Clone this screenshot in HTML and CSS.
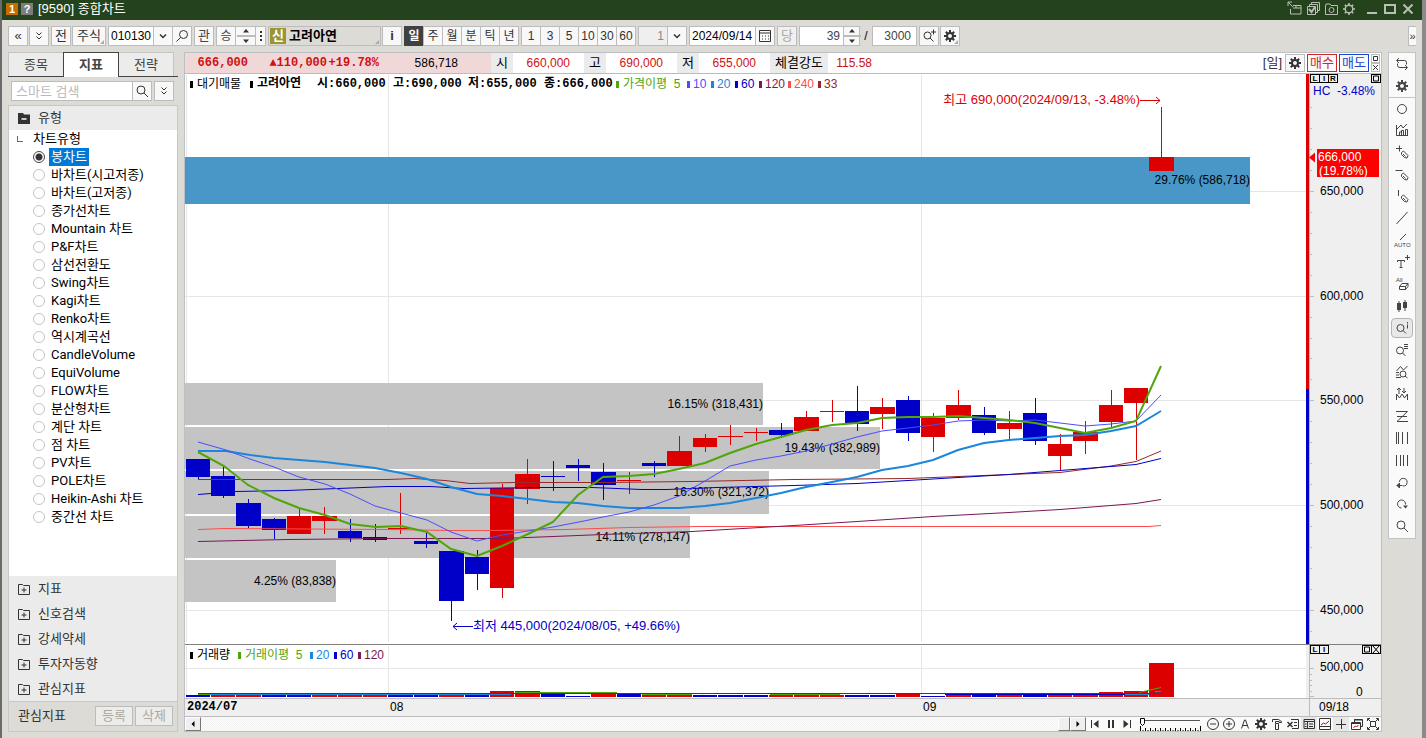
FILE: index.html
```html
<!DOCTYPE html>
<html lang="ko">
<head>
<meta charset="utf-8">
<title>[9590] 종합차트</title>
<link rel="stylesheet" href="styles.css">
</head>
<body>
<svg class="defs" aria-hidden="true">
  <symbol id="gear" viewBox="0 0 16 16"><circle cx="8" cy="8" r="3" fill="none" stroke="currentColor" stroke-width="2"/><path d="M8 2v2.5M8 11.500v2.500M2 8h2.500M11.500 8h2.500M3.800 3.800l1.800 1.800M10.400 10.400l1.800 1.800M12.200 3.800l-1.800 1.800M5.600 10.400l-1.800 1.800" stroke="currentColor" stroke-width="2"/></symbol>
  <symbol id="gear-thin" viewBox="0 0 16 16"><circle cx="8" cy="8" r="3.8" fill="none" stroke="currentColor" stroke-width="1.400"/><path d="M8 2v2M8 12v2M2 8h2M12 8h2M3.800 3.800l1.400 1.400M10.800 10.800l1.400 1.400M12.200 3.800l-1.400 1.400M5.200 10.800l-1.400 1.400" stroke="currentColor" stroke-width="1.600"/></symbol>
  <symbol id="lens" viewBox="0 0 16 16"><circle cx="7" cy="7" r="4" fill="none" stroke="currentColor"/><path d="M10 10l4 4" stroke="currentColor"/></symbol>
  <symbol id="lens-l" viewBox="0 0 16 16"><circle cx="9.500" cy="6.500" r="4" fill="none" stroke="currentColor"/><path d="M6.500 9.500l-4 4" stroke="currentColor"/></symbol>
  <symbol id="chev" viewBox="0 0 8 16"><path d="M1 6.500l3 3 3-3" fill="none" stroke="currentColor" stroke-width="1.500"/></symbol>
  <symbol id="dchev" viewBox="0 0 16 16"><path d="M5.500 4.500l2.500 2.500 2.500-2.500M5.500 8.500l2.500 2.500 2.500-2.500" fill="none" stroke="currentColor"/></symbol>
  <symbol id="updown" viewBox="0 0 18 18"><path d="M9 2l3 3.500H6zM9 16l3-3.500H6z" fill="currentColor"/><path d="M0 9h18" stroke="#bbb" stroke-width="2"/></symbol>
  <symbol id="folder" viewBox="0 0 12 12"><path d="M.5 1.500h4l1 1h6v9H.5z" fill="none" stroke="currentColor"/><path d="M6 4.500v5M3.500 7h5" stroke="currentColor"/></symbol>
  <symbol id="box" viewBox="0 0 8 7"><path d="M1.500 1h5v5h-5z" fill="none" stroke="currentColor" stroke-width="1"/></symbol>
  <symbol id="pen" viewBox="0 0 16 16"><path d="M7.500 8.500l2-1.500 4.500 4.500-1 2.500-2.500-.5-3-3zM9 10l2.500 2.500" fill="none" stroke="currentColor"/></symbol>
</svg>
<div class="window">
  <header class="titlebar">
    <span class="badge badge-num">1</span><span class="badge badge-help">?</span>
    <h1>[9590] 종합차트</h1>
    <div class="win-buttons">
      <button aria-label="창 분리"><svg viewBox="0 0 16 16"><path d="M1 1l5 5M1 5V1h4M6 4.500h8v8.500H3.500V8M6 7h8M9 4v3" fill="none" stroke="currentColor"/></svg></button>
      <button aria-label="창 선택"><svg viewBox="0 0 16 16"><path d="M2.500 5.500h8v8h-8zM4.500 5V3.500h8v8H11M6.500 3V1.500h8v8H13" fill="none" stroke="currentColor"/><path d="M4 8l2.500 3L10 6" fill="none" stroke="currentColor" stroke-width="2"/></svg></button>
      <button aria-label="화면 캡처"><svg viewBox="0 0 16 16"><path d="M2.500 4.500v9h12v-9H8L7 3H3v1.500z" fill="none" stroke="currentColor"/><circle cx="8.500" cy="9" r="2.500" fill="none" stroke="currentColor"/></svg></button>
      <button aria-label="설정"><svg><use href="#gear-thin"/></svg></button>
      <button class="wide" aria-label="최소화"><svg viewBox="0 0 16 16"><path d="M3 12h10" stroke="currentColor" stroke-width="2"/></svg></button>
      <button aria-label="최대화"><svg viewBox="0 0 16 16"><path d="M3 4h10v8H3z" fill="none" stroke="currentColor" stroke-width="2"/></svg></button>
      <button aria-label="닫기"><svg viewBox="0 0 16 16"><path d="M3.500 3.500l9 9M12.500 3.500l-9 9" stroke="currentColor" stroke-width="2"/></svg></button>
    </div>
  </header>

  <div class="toolbar">
    <div class="pair"><button class="btn sq">«</button><button class="btn sq" aria-label="펼치기"><svg><use href="#dchev"/></svg></button></div>
    <div class="pair"><button class="btn sq">전</button><button class="btn stock corner">주식</button></div>
    <div class="join"><input class="code" aria-label="종목코드" value="010130"><button class="btn sq" aria-label="종목 목록"><svg><use href="#chev"/></svg></button><button class="btn sq" aria-label="종목 검색"><svg><use href="#lens-l"/></svg></button></div>
    <button class="btn sq dim">관</button>
    <div class="join"><button class="btn sq dim">승</button><button class="btn spin-b" aria-label="이전 다음"><svg class="ud"><use href="#updown"/></svg></button><button class="btn dots" aria-label="더보기"><svg viewBox="0 0 8 16"><path d="M3 3h2v2H3zM3 7h2v2H3zM3 11h2v2H3z" fill="#333"/></svg></button></div>
    <div class="pair"><button class="stockname corner"><span class="credit">신</span>고려아연</button><button class="btn sq strong">i</button></div>
    <div class="join"><button class="btn sq on">일</button><button class="btn sq">주</button><button class="btn sq">월</button><button class="btn sq">분</button><button class="btn sq">틱</button><button class="btn sq">년</button></div>
    <div class="join"><button class="btn sq">1</button><button class="btn sq">3</button><button class="btn sq">5</button><button class="btn sq">10</button><button class="btn sq">30</button><button class="btn sq">60</button></div>
    <div class="join"><input class="minute" aria-label="분 간격" value="1" disabled><button class="btn drop" aria-label="분 목록"><svg><use href="#chev"/></svg></button></div>
    <div class="join"><input class="date" aria-label="조회일" value="2024/09/14"><button class="btn sq" aria-label="달력"><svg viewBox="0 0 16 16"><path d="M2.500 2.500h11v11h-11zM2 5h12" fill="none" stroke="currentColor"/><path d="M5 8h7M5 11h7" stroke="currentColor" stroke-width="1" stroke-dasharray="1 2"/></svg></button></div>
    <button class="btn sq" disabled>당</button>
    <div class="count"><div class="join"><input class="bars" aria-label="표시 봉수" value="39"><button class="btn spin-a" aria-label="봉수 증감"><svg class="ud"><use href="#updown"/></svg></button></div><span class="slash">/</span><input class="total" aria-label="전체 봉수" value="3000"></div>
    <div class="pair"><button class="btn sq" aria-label="확대"><svg viewBox="0 0 16 16"><circle cx="6.500" cy="7.500" r="3.500" fill="none" stroke="currentColor"/><path d="M9 10l3.500 3.500M10 4h5M12.500 1.500v5" stroke="currentColor"/></svg></button><button class="btn sq corner" aria-label="차트 설정"><svg><use href="#gear"/></svg></button></div>
    <button class="btn more">»</button>
  </div>

  <main class="main">
    <aside class="sidebar">
      <div class="tabs"><button>종목</button><button class="active">지표</button><button>전략</button></div>
      <div class="search"><div class="join"><input class="find" aria-label="스마트 검색" placeholder="스마트 검색"><button class="btn sq" aria-label="검색"><svg><use href="#lens"/></svg></button></div><button class="btn sq" aria-label="검색 옵션"><svg><use href="#dchev"/></svg></button></div>
      <div class="panel">
        <div class="group open"><svg viewBox="0 0 12 12"><path d="M0 1h5l1 1.500h6V12H0z" fill="#333"/><path d="M3.500 7h5" stroke="#fff" stroke-width="1.500"/></svg>유형</div>
        <fieldset class="tree">
          <legend>차트유형</legend>
          <label class="sel"><input type="radio" name="type" checked><span>봉차트</span></label>
          <label><input type="radio" name="type"><span>바차트(시고저종)</span></label>
          <label><input type="radio" name="type"><span>바차트(고저종)</span></label>
          <label><input type="radio" name="type"><span>종가선차트</span></label>
          <label><input type="radio" name="type"><span>Mountain 차트</span></label>
          <label><input type="radio" name="type"><span>P&amp;F차트</span></label>
          <label><input type="radio" name="type"><span>삼선전환도</span></label>
          <label><input type="radio" name="type"><span>Swing차트</span></label>
          <label><input type="radio" name="type"><span>Kagi차트</span></label>
          <label><input type="radio" name="type"><span>Renko차트</span></label>
          <label><input type="radio" name="type"><span>역시계곡선</span></label>
          <label><input type="radio" name="type"><span>CandleVolume</span></label>
          <label><input type="radio" name="type"><span>EquiVolume</span></label>
          <label><input type="radio" name="type"><span>FLOW차트</span></label>
          <label><input type="radio" name="type"><span>분산형차트</span></label>
          <label><input type="radio" name="type"><span>계단 차트</span></label>
          <label><input type="radio" name="type"><span>점 차트</span></label>
          <label><input type="radio" name="type"><span>PV차트</span></label>
          <label><input type="radio" name="type"><span>POLE차트</span></label>
          <label><input type="radio" name="type"><span>Heikin-Ashi 차트</span></label>
          <label><input type="radio" name="type"><span>중간선 차트</span></label>
        </fieldset>
        <div class="group"><svg><use href="#folder"/></svg>지표</div>
        <div class="group"><svg><use href="#folder"/></svg>신호검색</div>
        <div class="group"><svg><use href="#folder"/></svg>강세약세</div>
        <div class="group"><svg><use href="#folder"/></svg>투자자동향</div>
        <div class="group"><svg><use href="#folder"/></svg>관심지표</div>
        <div class="fav"><span>관심지표</span><button disabled>등록</button><button disabled>삭제</button></div>
      </div>
    </aside>

    <section class="chart">
      <div class="quote">
        <div class="now"><b>666,000</b><b>▲110,000</b><b>+19.78%</b><span>586,718</span></div>
        <span class="lab">시</span><span class="val">660,000</span>
        <span class="lab">고</span><span class="val">690,000</span>
        <span class="lab">저</span><span class="val">655,000</span>
        <span class="lab long">체결강도</span><span class="val power">115.58</span>
        <span class="period">[일]</span>
        <button class="btn sq" aria-label="설정"><svg><use href="#gear"/></svg></button>
        <button class="order buy">매수</button><button class="order sell">매도</button>
        <div class="mini"><button aria-label="최대화"><svg viewBox="0 0 7 7"><path d="M1.500 1.500h4v4h-4z" fill="none" stroke="#333"/></svg></button><button aria-label="닫기"><svg viewBox="0 0 7 7"><path d="M1 1l5 5M6 1L1 6" stroke="#333"/></svg></button></div>
      </div>

      <div class="pane price">
        <div class="legend legend-price"><span class="k">대기매물</span><b class="k">고려아연</b><b>시:660,000</b><b>고:690,000</b><b>저:655,000</b><b>종:666,000</b><span class="k c5">가격이평&nbsp; 5</span><span class="k c10">10</span><span class="k c20">20</span><span class="k c60">60</span><span class="k c120">120</span><span class="k c240">240</span><span class="k c33">33</span></div>
        <svg class="plot" role="img" aria-label="일봉 가격 차트"><g transform="translate(-185 -74)">
          <path class="grid" d="M185 191.500h3000M185 296.500h3000M185 400.500h3000M185 505.500h3000M185 610.500h3000M186.500 75v567M388.500 75v567M921.500 75v567"/>
          <path fill="#c4c4c4" d="M185 383h578v42H185zM185 427h695v42H185zM185 471h584v43H185zM185 516h505v42H185zM185 560h151v42H185z"/>
          <path fill="#4897c7" d="M185 157h1065v47H185z"/>
          <g class="vol-label"><text x="763" y="408">16.15% (318,431)</text><text x="880" y="452">19.43% (382,989)</text><text x="769" y="496">16.30% (321,372)</text><text x="690" y="541">14.11% (278,147)</text><text x="336" y="585">4.25% (83,838)</text></g>
          <g class="down">
            <path class="wick" d="M198.500 459v20M223.500 467v31M248.500 499v29M274.500 518v21M350.500 519v23M375.500 524v18M426.500 533v15M451.500 551v70M477.500 550v40M553.500 461v30M578.500 459v22M603.500 463v37M654.500 461v16M781.500 423v14M857.500 386v45M908.500 396v45M984.500 407v28M1035.500 398v47"/>
            <path d="M186 459h24v18h-24zM211 476h24v20h-24zM236 503h25v23h-25zM262 519h24v11h-24zM338 531h24v7h-24zM363 537h24v3h-24zM414 541h24v3h-24zM439 551h25v50h-25zM465 557h24v17h-24zM541 476h24v1h-24zM566 465h24v3h-24zM591 472h25v13h-25zM642 463h24v3h-24zM769 430h24v5h-24zM845 411h24v13h-24zM896 400h24v33h-24zM972 415h24v18h-24zM1023 413h24v28h-24z"/>
          </g>
          <g class="up">
            <path class="wick" d="M299.500 509v25M324.500 507v27M400.500 493v41M502.500 484v114M527.500 459v45M629.500 472v22M679.500 436v30M705.500 434v18M730.500 425v20M756.500 428v13M806.500 411v20M832.500 400v22M882.500 398v31M933.500 413v39M958.500 390v30M1009.500 411v29M1060.500 434v36M1085.500 421v33M1111.500 390v38M1136.500 388v72M1161.500 107v64"/>
            <path d="M287 516h24v18h-24zM312 516h25v5h-25zM388 528h25v1h-25zM490 488h24v100h-24zM515 474h25v15h-25zM617 480h24v1h-24zM667 451h25v15h-25zM693 438h24v9h-24zM718 436h25v1h-25zM744 432h24v1h-24zM794 417h25v14h-25zM820 411h24v1h-24zM870 407h25v7h-25zM921 418h24v19h-24zM946 405h25v13h-25zM997 423h25v6h-25zM1048 444h24v12h-24zM1073 432h25v9h-25zM1099 405h24v17h-24zM1124 388h24v15h-24zM1149 157h25v14h-25z"/>
          </g>
          <polyline class="ma s33" points="198,479.500 388,479.500 414,478.500 445,480.500 470,483.500 515,482.500 603,482.500 692,481.500 794,479.500 908,478.500 1009,474.500 1060,472.500 1111,466 1136,461.500 1161,451"/>
          <polyline class="ma s240" points="198,529.500 225,528.500 388,529.500 450,530.500 490,530.500 565,529.500 630,527.500 700,526.500 1149,526.500 1161,525.500"/>
          <polyline class="ma s120" points="198,541.500 287,539.500 388,538.500 502,538.500 553,536.500 603,534.500 692,531.500 743,528.500 794,525.500 857,521.500 933,516.500 1009,512.500 1060,509.500 1111,505.500 1136,503.500 1161,499.500"/>
          <polyline class="ma s60" points="198,494.500 236,491.500 287,490.500 338,488.500 388,486.500 430,486.500 464,488.500 541,487.500 592,487.500 642,489.500 667,489.500 717,487.500 794,485.500 857,483.500 908,480.500 958,477.500 1009,474.500 1060,470.500 1111,466.500 1136,464.500 1161,458.500"/>
          <polyline class="ma s20" points="198,451 226,451 250,455 274,458 325,462 375,468 401,473 427,479 451,487 477,494 502,496 528,499 553,502 578,503 603,506 629,508 679,508 705,506 730,503 756,498 781,493 806,487 832,482 857,477 882,470 908,466 933,460 958,450 984,443 1009,440 1035,438 1060,436 1085,435 1111,431 1136,426 1161,411"/>
          <polyline class="ma s10" points="198,442 226,450 250,459 274,467 299,477 325,484 350,494 375,506 401,513 427,520 451,532 477,541 502,535 528,531 553,527 584,521 603,517 629,512 654,505 679,496 705,481 730,466 756,460 781,456 806,451 832,444 857,437 882,431 908,428 933,425 958,421 984,420 1009,421 1035,420 1060,423 1085,426 1111,424 1136,421 1161,395"/>
          <polyline class="ma s5" points="198,452 224,466 248,485 274,498 299,508 325,515 350,524 376,527 401,526 427,532 451,549 477,556 502,546 528,534 553,522 578,495 603,477 629,476 654,474 679,469 705,463 730,453 756,444 781,437 806,430 832,425 857,423 882,418 908,417 933,417 958,416 984,418 1009,420 1035,423 1060,428 1085,433 1111,428 1136,421 1161,366"/>
          <text class="vol-label" x="1250" y="184">29.76% (586,718)</text>
          <text class="peak hi" x="1140" y="104">최고 690,000(2024/09/13, -3.48%)</text>
          <path class="arrow hi-s" d="M1140 100.500h20M1156 97l4 3.500-4 3.500"/>
          <text class="peak lo" x="473" y="630">최저 445,000(2024/08/05, +49.66%)</text>
          <path class="arrow lo-s" d="M473 626.500h-20M457 623l-4 3.500 4 3.500"/>
        </g></svg>
        <div class="scale">
          <svg class="axis" role="img" aria-label="가격 축"><g transform="translate(-1306 -74)">
            <path fill="#efefef" d="M1309 74h73v570h-73z"/><path fill="#d00" d="M1306 74h3v315h-3z"/><path fill="#0000c8" d="M1306 389h3v255h-3z"/>
            <path class="tick" d="M1309.500 74v570M1310 191.500h4M1310 296.500h4M1310 400.500h4M1310 505.500h4M1310 610.500h4M1310 107.500h2M1310 128.500h2M1310 149.500h2M1310 170.500h2M1310 212.500h2M1310 233.500h2M1310 254.500h2M1310 275.500h2M1310 317.500h2M1310 338.500h2M1310 358.500h2M1310 379.500h2M1310 421.500h2M1310 442.500h2M1310 463.500h2M1310 484.500h2M1310 526.500h2M1310 547.500h2M1310 568.500h2M1310 589.500h2M1310 631.500h2"/>
            <path fill="red" d="M1317 149h62v28h-62zM1309 157.500l6-5v10z"/>
            <g class="num"><text class="lo" x="1313" y="95">HC</text><text class="lo" x="1337" y="95">-3.48%</text><text class="inv" x="1318" y="161">666,000</text><text class="inv" x="1319" y="175">(19.78%)</text><text x="1320" y="195">650,000</text><text x="1320" y="300">600,000</text><text x="1320" y="404">550,000</text><text x="1320" y="509">500,000</text><text x="1320" y="614">450,000</text></g>
          </g></svg>
          <div class="flags"><div><button>L</button><button>I</button><button>R</button></div><div><button aria-label="최대화"><svg><use href="#box"/></svg></button></div></div>
        </div>
      </div>

      <div class="pane volume">
        <div class="legend legend-vol"><span class="k">거래량</span><span class="k c5">거래이평&nbsp; 5</span><span class="k c20">20</span><span class="k c60">60</span><span class="k c120">120</span></div>
        <svg class="plot" role="img" aria-label="거래량 차트"><g transform="translate(-185 -645)">
          <path class="grid" d="M185 668.500h3000M186.500 646v52M388.500 646v52M921.500 646v52"/>
          <path fill="#0000c8" d="M186 695h24v2h-24zM262 695h24v2h-24zM287 695h24v2h-24zM388 695h25v2h-25zM414 695h24v2h-24zM465 695h24v2h-24zM541 694h24v3h-24zM566 696h24v1h-24zM617 694h24v3h-24zM693 695h24v2h-24zM718 695h25v2h-25zM744 695h24v2h-24zM845 695h24v2h-24zM870 695h25v2h-25zM921 696h24v1h-24zM972 694h24v3h-24zM1023 694h24v3h-24z"/>
          <path fill="#d00" d="M211 695h24v2h-24zM236 695h25v2h-25zM312 695h25v2h-25zM338 695h24v2h-24zM363 695h24v2h-24zM439 695h25v2h-25zM490 691h24v6h-24zM515 691h25v6h-25zM591 694h25v3h-25zM642 695h24v2h-24zM667 695h25v2h-25zM769 695h24v2h-24zM794 695h25v2h-25zM820 695h24v2h-24zM896 694h24v3h-24zM946 695h25v2h-25zM997 695h25v2h-25zM1048 695h24v2h-24zM1073 694h25v3h-25zM1099 692h24v5h-24zM1124 691h24v6h-24zM1149 663h25v34h-25z"/>
          <path class="ma s20" d="M198 694h313M1123 694h26M1155 692h6"/>
          <path class="ma s60" d="M945 694.500h180"/>
          <path class="ma s120" d="M198 693.500h950l13-1"/>
          <path class="ma s5v" d="M198 694.500h12M515 692.500h102M642 694.500h50M770 694.500h70M1139 692.500l22-5"/>
        </g></svg>
        <div class="scale">
          <svg class="axis" role="img" aria-label="거래량 축"><g transform="translate(-1306 -645)"><path fill="#efefef" d="M1309 645h73v53h-73z"/><path class="tick" d="M1309.500 645v53M1310 668.500h4M1310 674.500h2M1310 680.500h2M1310 685.500h2M1310 691.500h2M1310 696.500h4"/><g class="num"><text x="1320" y="671">500,000</text><text x="1356" y="696">0</text></g></g></svg>
          <div class="flags"><div><button>L</button><button>I</button></div><div><button aria-label="최대화"><svg><use href="#box"/></svg></button><button aria-label="닫기"><svg viewBox="0 0 8 7"><path d="M1 0l6 7M7 0L1 7" stroke="currentColor"/></svg></button></div></div>
        </div>
      </div>

      <div class="dates"><b>2024/07</b><span>08</span><span>09</span><span class="last">09/18</span></div>

      <div class="scrollbar">
        <button class="sb" aria-label="왼쪽"><svg viewBox="0 0 8 8"><path d="M5.500 1v6L2.500 4z"/></svg></button>
        <div class="track"></div>
        <button class="sb thumb" aria-label="스크롤"></button>
        <button class="sb" aria-label="오른쪽"><svg viewBox="0 0 8 8"><path d="M2.500 1v6l3-3z"/></svg></button>
        <div class="play">
          <button aria-label="처음"><svg viewBox="0 0 16 16"><path d="M4.500 4v8" stroke="currentColor"/><path d="M11.500 4v8l-5-4z" fill="currentColor"/></svg></button>
          <button aria-label="일시정지"><svg viewBox="0 0 16 16"><path d="M5 4h2v8H5zM9 4h2v8H9z" fill="currentColor"/></svg></button>
          <button aria-label="끝"><svg viewBox="0 0 16 16"><path d="M11.500 4v8" stroke="currentColor"/><path d="M4.500 4v8l5-4z" fill="currentColor"/></svg></button>
        </div>
        <svg class="slider" viewBox="0 0 62 14"><path d="M4 3.500h57" stroke="#555"/><path d="M1.500 1.500h4v5l-2 2-2-2z" fill="#fff" stroke="#000"/><path d="M1.500 9v5M61.500 9v5M6.500 11v3M11.500 11v3M16.500 11v3M21.500 11v3M26.500 11v3M31.500 11v3M36.500 11v3M41.500 11v3M46.500 11v3M51.500 11v3M56.500 11v3" stroke="#000"/><path d="M1 13.500h61" stroke="#000" stroke-dasharray="1 1.500"/></svg>
        <div class="tools">
          <button aria-label="축소"><svg viewBox="0 0 16 16"><circle cx="8" cy="8" r="5.500" fill="none" stroke="currentColor"/><path d="M5 8h6" stroke="currentColor"/></svg></button>
          <button aria-label="확대"><svg viewBox="0 0 16 16"><circle cx="8" cy="8" r="5.500" fill="none" stroke="currentColor"/><path d="M5 8h6M8 5v6" stroke="currentColor"/></svg></button>
          <button aria-label="글꼴"><svg viewBox="0 0 16 16"><path d="M4.500 12.500L7.500 4h1l3 8.500M5.500 9.500h5" fill="none" stroke="currentColor"/></svg></button>
          <button aria-label="설정"><svg><use href="#gear"/></svg></button>
          <button aria-label="도구"><svg viewBox="0 0 16 16"><path d="M3.500 6V3.500h6l3 2v1H10v-1H6.500V7M6.500 7.500h3v6h-3z" fill="none" stroke="currentColor"/></svg></button>
          <button aria-label="엑셀"><svg viewBox="0 0 16 16"><path d="M6 3.500h7.500v9H7M9 6.500h3M9 9.500h3" fill="none" stroke="currentColor"/><path d="M2.500 6l5 5M7.500 6l-5 5" stroke="currentColor" stroke-width="1.500"/></svg></button>
          <button class="pressed" aria-label="표"><svg viewBox="0 0 16 16"><path d="M3 3.500h10.500v9H3zM3 5.500h10M6.500 5v7M8 8h4M8 10.500h4M4 8h1.500M4 10.500h1.500" fill="none" stroke="currentColor"/></svg></button>
          <button aria-label="분할 차트"><svg viewBox="0 0 16 16"><path d="M2.500 2.500h11v11h-11zM2.500 10.500h11" fill="none" stroke="currentColor"/><path d="M4 9l2.500-2 2 1L12 5" fill="none" stroke="#c00"/></svg></button>
          <button class="pressed" aria-label="십자선"><svg viewBox="0 0 16 16"><path d="M3 8.500h10M8.500 3v10" stroke="currentColor"/></svg></button>
          <button aria-label="새 창"><svg viewBox="0 0 16 16"><path d="M5.500 6V3.500h8v7H12M5 4h8.500M2.500 6.500h9v7h-9zM2.500 7.500h9" fill="none" stroke="currentColor"/><path d="M4.500 11.500l2-1.500 1 1 2-2" fill="none" stroke="#c00"/></svg></button>
          <button aria-label="전체 화면"><svg viewBox="0 0 16 16"><path d="M5.500 5.500h5v5h-5zM2.500 5V2.500H5M11 2.500h2.500V5M13.500 11v2.500H11M5 13.500H2.500V11M3 3l2.500 2.500M13 3l-2.500 2.500M3 13l2.500-2.500M13 13l-2.500-2.500" fill="none" stroke="currentColor"/></svg></button>
        </div>
      </div>
    </section>

    <nav class="drawbar" aria-label="그리기 도구">
      <button aria-label="새로고침"><svg viewBox="0 0 16 16"><path d="M5 1.500L2.500 4 5 6.500M3 4h7.500q2 0 2 2v2M11 8.500l2.500 2.500L11 13.500M13 11H6q-2.500 0-2.500-2V7" fill="none" stroke="currentColor" transform="translate(0 .5)"/></svg></button>
      <button aria-label="설정"><svg><use href="#gear"/></svg></button>
      <button class="sep" aria-label="원"><svg viewBox="0 0 16 16"><circle cx="8" cy="8" r="4.500" fill="none" stroke="currentColor"/></svg></button>
      <button aria-label="지표 추가"><svg viewBox="0 0 16 16"><path d="M2.500 3v10.500H14M5.500 13v-3h2v3M7.500 13V8.500h2V13M11.500 13V7.500h2V13M3 7l4-4 2 3 4-4" fill="none" stroke="currentColor"/></svg></button>
      <button aria-label="십자 그리기"><svg viewBox="0 0 16 16"><path d="M2 4.500h6M5.500 1.500v6" stroke="currentColor"/><use href="#pen"/></svg></button>
      <button aria-label="수평선"><svg viewBox="0 0 16 16"><path d="M1.500 4.500h7" stroke="currentColor"/><use href="#pen"/></svg></button>
      <button aria-label="수직선"><svg viewBox="0 0 16 16"><path d="M4.500 2v6" stroke="currentColor"/><use href="#pen"/></svg></button>
      <button aria-label="추세선"><svg viewBox="0 0 16 16"><path d="M2.500 14l11-12" stroke="currentColor"/></svg></button>
      <button class="txt" aria-label="자동 추세선"><svg viewBox="0 0 16 16"><path d="M6 8l6-6" stroke="currentColor"/><text x="0" y="15">AUTO</text></svg></button>
      <button aria-label="문자"><svg viewBox="0 0 16 16"><path d="M3.500 8V6.500h7V8M7 6.500v7M5.500 13.500h3M11 3.500h5M13.500 1v5" fill="none" stroke="currentColor"/></svg></button>
      <button class="txt" aria-label="모두 지우기"><svg viewBox="0 0 16 16"><text x="2" y="6">All</text><path d="M8 7.500h6l-2.500 3h-6zM5.500 10.500v3h6v-3M11.500 13.500l2.500-3v-3" fill="none" stroke="currentColor"/></svg></button>
      <button aria-label="봉 모양"><svg viewBox="0 0 16 16"><path d="M5 3v11M11 2v11" stroke="currentColor"/><path d="M3 5h4v7H3zM9 4h4v6H9z" fill="currentColor"/></svg></button>
      <button class="pressed" aria-label="정보 조회"><svg viewBox="0 0 16 16"><circle cx="6.500" cy="8" r="3.500" fill="none" stroke="currentColor"/><path d="M9 10.500l3 3M13.500 4.500v4M13.500 2v1.500" stroke="currentColor"/></svg></button>
      <button aria-label="목록 조회"><svg viewBox="0 0 16 16"><circle cx="6" cy="8.500" r="3.500" fill="none" stroke="currentColor"/><path d="M8.500 11l3 3M10 2.500h4M10 4.500h4M10 6.500h4" stroke="currentColor"/></svg></button>
      <button aria-label="패턴 조회"><svg viewBox="0 0 16 16"><circle cx="9" cy="10" r="3" fill="none" stroke="currentColor"/><path d="M11 12l2.500 2M2 8.500h3M2 11h3M2 13.500h5M2.500 7l4-4.500 3 3.500 4-4" fill="none" stroke="currentColor"/></svg></button>
      <button aria-label="신호"><svg viewBox="0 0 16 16"><path d="M2.500 14V8l3 4 2.500-4 2.500 4 3-4v6M5 8V2M3 4l2-2 2 2M10 2v5M8 5l2 2 2-2" fill="none" stroke="currentColor"/></svg></button>
      <button aria-label="지그재그"><svg viewBox="0 0 16 16"><path d="M2 3.500h11.500L3 13.500h11M3 8.500h10" fill="none" stroke="currentColor"/></svg></button>
      <button aria-label="간격선"><svg viewBox="0 0 16 16"><path d="M2.500 2v12M4.500 2v12M8.500 2v12M13.500 2v12" stroke="currentColor"/></svg></button>
      <button aria-label="등간격선"><svg viewBox="0 0 16 16"><path d="M2.500 3v11M6.500 3v11M9.500 3v11M13.500 3v11" stroke="currentColor"/></svg></button>
      <button aria-label="실행 취소"><svg viewBox="0 0 16 16"><path d="M5.500 8a3.800 3.800 0 1 1 3.500 4" fill="none" stroke="currentColor"/><path d="M3 11.500h5.500M5.500 9v5L3 11.500z" fill="currentColor" stroke="currentColor"/></svg></button>
      <button aria-label="다시 실행"><svg viewBox="0 0 16 16"><path d="M7.500 12a4 4 0 1 1 4-3.500" fill="none" stroke="currentColor"/><path d="M9 9.500h5l-2.500 3z" fill="currentColor"/></svg></button>
      <button aria-label="돋보기"><svg><use href="#lens"/></svg></button>
    </nav>
  </main>
</div>
</body>
</html>
```
FILE: styles.css
```css
* { box-sizing: border-box; }
body { margin: 0; background: #6b6b6b; color: #000; font: 12px/16px "Liberation Sans", "Noto Sans CJK KR", sans-serif; }
button, input { margin: 0; padding: 0; font: inherit; color: inherit; border-radius: 0; }
button { display: flex; align-items: center; justify-content: center; border: 0; background: none; white-space: nowrap; }
button svg { width: 16px; height: 16px; flex: none; }
b { font-weight: 700; }
.defs { position: absolute; width: 0; height: 0; }

.window { display: flex; flex-direction: column; min-height: 100vh; background: #dcdbd6; border: solid #6b6b6b; border-width: 0 4px 1px 2px; border-right-color: #8a8a8a; }

.titlebar { display: flex; align-items: center; gap: 2px; height: 20px; padding: 0 6px 2px 4px; background: #24431c; color: #fff; }
.titlebar h1 { margin: 0 0 0 3px; font-size: 13px; line-height: 18px; font-weight: 400; }
.badge { width: 12px; height: 12px; font-size: 11px; line-height: 12px; font-weight: 700; text-align: center; }
.badge-num { background: #c86a00; margin-right: 1px; }
.badge-help { background: #7d7d7d; }
.win-buttons { display: flex; gap: 2px; margin-left: auto; color: #b9beb6; }
.win-buttons .wide { margin-left: 5px; }

.toolbar { display: flex; align-items: center; gap: 2px; padding: 6px 6px 6px; }
.pair { display: flex; gap: 1px; }
.join { display: flex; }
.join > * + * { margin-left: -1px; }
.btn { height: 20px; border: 1px solid #bcbcbc; background: #f8f8f8; color: #333; }
.sq { width: 20px; }
.btn:disabled { color: #aaa99f; background: #f0f0ee; }
.toolbar .btn, .toolbar .stockname { font-size: 13px; }
.toolbar .dim { color: #444; }
.toolbar .stock { width: 34px; }
.toolbar .strong { font-weight: 700; }
.toolbar .join > .sq { flex: none; font-size: 12px; }
.toolbar .on { background: #404040; border-color: #404040; color: #fff; font-weight: 700; }
.corner { position: relative; }
.corner::after { content: ""; position: absolute; right: 1px; bottom: 1px; border: 2px solid #aaa; border-top-color: transparent; border-left-color: transparent; }
.spin-a { width: 17px; }
.spin-b { width: 21px; }
.ud { width: 18px; height: 18px; }
.drop { width: 20px; }
.dots { width: 11px; }
.dots svg { width: 8px; }
.more { width: 8px; margin-left: auto; overflow: hidden; border-right: 0; }
.toolbar .more { font-size: 11px; }
.toolbar input { height: 20px; border: 1px solid #bcbcbc; background: #fff; }
.code { width: 46px; padding-left: 2px; }
.minute { width: 30px; padding-right: 3px; text-align: right; color: #888; }
.toolbar .minute { background: #efefef; border: 1px solid #bcbcbc; }
.date { width: 67px; padding-left: 2px; }
.bars { width: 45px; padding-right: 3px; text-align: right; color: #444; }
.total { width: 45px; padding-right: 5px; text-align: right; color: #444; }
.count { display: flex; align-items: center; }
.slash { width: 12px; text-align: center; }
.stockname { justify-content: flex-start; width: 113px; height: 20px; padding-left: 1px; gap: 3px; border: 1px solid #bcbcbc; font-weight: 700; }
.credit { width: 16px; height: 16px; line-height: 16px; background: #9c9430; color: #fff; text-align: center; }

.main { flex: 1; display: flex; align-items: stretch; gap: 6px; padding: 0 6px 7px; }

.sidebar { flex: none; display: flex; flex-direction: column; width: 170px; font-size: 13px; color: #333; }
.tabs { display: flex; border-bottom: 1px solid #444; }
.tabs button { width: 56px; height: 24px; margin-right: -1px; border: 1px solid #c4c4c4; border-bottom: 0; background: #ececec; color: #444; }
.tabs .active { position: relative; height: 25px; margin-bottom: -1px; background: #fff; border-color: #444; font-weight: 700; }
.search { display: flex; gap: 2px; padding: 4px 3px; }
.find { width: 122px; height: 20px; padding: 0 4px; border: 1px solid #bcbcbc; }
.find::placeholder { color: #bbb; opacity: 1; }
.panel { flex: 1; display: flex; flex-direction: column; border: 1px solid #c8c8c8; background: #fff; }
.group { display: flex; align-items: center; gap: 8px; height: 25px; padding-left: 9px; background: #ebebeb; }
.group.open { height: 24px; }
.group svg { width: 12px; height: 12px; }
.tree { position: relative; flex: 1; margin: 0; padding: 0 0 0 24px; border: 0; color: #000; font-family: Roboto, "Noto Sans CJK KR", sans-serif; }
.tree::before { content: ""; position: absolute; left: 8px; top: -12px; width: 5px; height: 5px; border: solid #666; border-width: 0 0 1px 1px; }
.tree legend { padding: 0; line-height: 18px; }
.tree label { display: flex; align-items: center; gap: 4px; height: 18px; white-space: nowrap; }
.tree label span { padding: 0 2px; line-height: 18px; }
.tree .sel span { background: #0078d7; color: #fff; }
.tree input { appearance: none; flex: none; width: 12px; height: 12px; border: 1px solid #c4c4c4; border-radius: 50%; background: #fff; }
.tree input:checked { border-color: #444; background: radial-gradient(circle, #333 0 3px, #fff 4px); }
.fav { display: flex; align-items: center; gap: 2px; height: 30px; padding: 0 4px 1px 9px; border-top: 1px solid #c8c8c8; background: #dcdbd6; }
.fav span { margin-right: auto; }
.fav button { width: 38px; height: 20px; border: 1px solid #bcbcbc; background: #ececea; color: #aaa99f; }

.chart { flex: 1; min-width: 0; display: flex; flex-direction: column; border: 1px solid #bcc0c4; background: #fff; }
.quote { display: flex; align-items: center; height: 21px; padding-right: 1px; border-bottom: 1px solid #bcbcbc; }
.now { display: grid; grid-template-columns: 63px 79px 52px 79px; width: 306px; height: 20px; line-height: 20px; background: #f1d8d8; text-align: right; }
.now b, .legend b { font-family: "Liberation Mono", "Noto Sans CJK KR", monospace; font-size: 12px; }
.now b { color: #d01010; }
.lab { width: 22px; background: #ebebeb; line-height: 20px; text-align: center; font-size: 13px; }
.lab.long { width: 58px; white-space: nowrap; }
.val { width: 71px; padding-right: 14px; text-align: right; color: #d01010; }
.power { width: 50px; padding-right: 6px; }
.period { margin-left: auto; margin-right: 3px; color: #333; font-size: 13px; white-space: nowrap; }
.quote .btn { height: 18px; }
.order { width: 30px; height: 18px; margin-left: 2px; border: 1px solid; background: #fafafa; font-size: 13px; }
.buy { color: #d02828; }
.sell { color: #1c48d0; }
.mini { margin-left: 2px; }
.mini button { width: 9px; height: 9px; border: 1px solid #bcbcbc; }
.mini svg { width: 7px; height: 7px; }

.pane { position: relative; display: flex; }
.price { flex: 1; min-height: 570px; }
.volume { height: 54px; border-top: 1px solid #808080; }
.plot { flex: 1; min-width: 0; height: auto; overflow: hidden; }
.scale { position: relative; flex: none; width: 75px; background: #efefef; }
.axis { display: block; width: 75px; height: 100%; }
.flags { position: absolute; top: 0; left: 4px; right: 1px; display: flex; justify-content: space-between; }
.flags div { display: flex; }
.flags button { width: 10px; height: 9px; margin-right: -1px; border: 1px solid #000; background: #efefef; font-size: 8px; line-height: 7px; font-weight: 700; }
.flags svg { width: 8px; height: 7px; }
.legend { position: absolute; top: 2px; left: 5px; display: grid; height: 16px; white-space: nowrap; font-size: 12px; }
.legend-price { grid-template-columns: 60px 67px 76px 75px 76px 72px 71px 24px 24px 24px 29px 30px 30px; }
.legend-vol { grid-template-columns: 48px 72px 24px 24px 40px; }
.legend > * { display: flex; align-items: center; gap: 4px; }
.legend .k::before { content: ""; width: 3px; height: 7px; background: currentColor; }
.c5 { color: #4fa50a; } .c10 { color: #4c4cff; } .c20 { color: #1a86dc; } .c60 { color: #0000c8; } .c120 { color: #7a1850; } .c240 { color: #ff4c4c; } .c33 { color: #982828; }
.c10, .c20, .c60, .c120, .c240, .c33 { font-size: 12px; }
.legend > .c10, .legend > .c20, .legend > .c60, .legend > .c120, .legend > .c240, .legend > .c33 { gap: 3px; }

.grid { stroke: #e6e6e6; fill: none; }
.ma { fill: none; }
.s5 { stroke: #4fa50a; stroke-width: 2; } .s5v { stroke: #4fa50a; } .s10 { stroke: #4c4cff; } .s20 { stroke: #1a86dc; stroke-width: 2; } .s60 { stroke: #0000c8; } .s120 { stroke: #7a1850; } .s240 { stroke: #ff4c4c; } .s33 { stroke: #982828; }
.down { fill: #0000c8; } .down .wick { stroke: #0000c8; }
.up { fill: #d00; } .up .wick { stroke: #d00; }
.vol-label { text-anchor: end; }
.peak { font-size: 13px; }
.hi { fill: #d00; text-anchor: end; } .lo { fill: #0000c8; } .inv { fill: #fff; }
.arrow { fill: none; } .hi-s { stroke: #d00; } .lo-s { stroke: #0000c8; }
.tick { stroke: #bcbcbc; fill: none; }

.dates { display: grid; grid-template-columns: 203px 533px 1fr 72px; height: 18px; border-top: 1px solid #bcbcbc; background: #efefef; line-height: 17px; }
.dates > * { padding-left: 2px; }
.dates b { font-family: "Liberation Mono", monospace; }
.dates .last { padding-left: 9px; border-left: 1px solid #bcbcbc; }

.scrollbar { display: flex; height: 15px; border-top: 1px solid #bcbcbc; background: #fafafa; }
.sb { width: 16px; border: 1px solid; border-color: #fff #777 #777 #fff; background: #efefef; }
.sb svg { width: 8px; height: 8px; }
.thumb { width: 12px; }
.track { flex: 1; background: repeating-conic-gradient(#fff 0 25%, #f0f0f0 0 50%) 0 0 / 2px 2px; }
.play, .tools { display: flex; color: #333; }
.play { margin-left: 1px; }
.play button { width: 16px; }
.slider { width: 62px; height: 14px; margin: 0 4px; }
.tools button { width: 16px; overflow: hidden; }
.pressed { background: #e8e8e8; }

.drawbar { flex: none; align-self: flex-start; width: 28px; padding-bottom: 1px; border: 1px solid #c4c4c4; background: #fafafa; color: #444; }
.drawbar button { width: 26px; height: 22px; }
.drawbar .sep { border-top: 1px solid #c4c4c4; }
.drawbar .pressed { width: 22px; height: 20px; margin: 1px 2px; border: 1px solid #b4b4b4; border-radius: 4px; }
.drawbar text { font-size: 6px; fill: currentColor; }
.drawbar svg { overflow: visible; }
```
